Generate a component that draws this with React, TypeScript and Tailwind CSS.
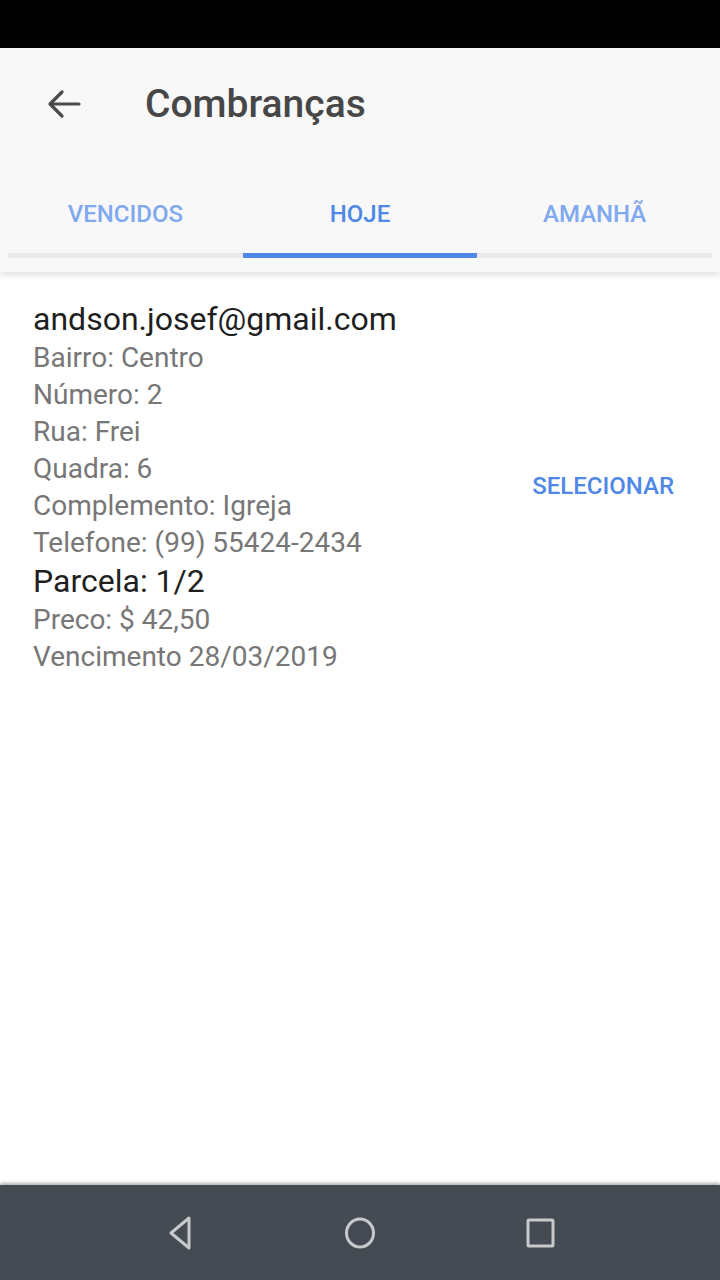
import React from "react";

const font = { fontFamily: "Roboto, 'Noto Sans', sans-serif" };

export default function App() {
  const rows = [
    "Bairro: Centro",
    "Número: 2",
    "Rua: Frei",
    "Quadra: 6",
    "Complemento: Igreja",
    "Telefone: (99) 55424-2434",
  ];
  return (
    <div className="w-[720px] h-[1280px] flex flex-col bg-white overflow-hidden" style={font}>
      <div className="h-[48px] bg-black shrink-0" />
      <div className="bg-[#f8f8f8] h-[224px] shrink-0 flex flex-col relative z-10 shadow-[0_3px_6px_rgba(0,0,0,0.12)]">
        <div className="h-[112px] flex items-center">
          <div className="w-[145px] flex items-center pl-[47px]">
            <svg width="34" height="30" viewBox="0 0 34 30" fill="none" stroke="#4a4a4a" strokeWidth="3.2" strokeLinecap="round" strokeLinejoin="round">
              <path d="M32 15H3M15 3L3 15l12 12" />
            </svg>
          </div>
          <span className="text-[39px] font-medium text-[#474747]">Combranças</span>
        </div>
        <div className="px-[8px] flex flex-col">
          <div className="flex h-[93px] pt-[14px]">
            <div className="flex-1 flex items-center justify-center text-[24px] font-medium text-[#80a9ef]">VENCIDOS</div>
            <div className="flex-1 flex items-center justify-center text-[24px] font-medium text-[#4f88e6]">HOJE</div>
            <div className="flex-1 flex items-center justify-center text-[24px] font-medium text-[#80a9ef]">AMANHÃ</div>
          </div>
          <div className="h-[5px] bg-[#ebebeb] flex">
            <div className="flex-1" />
            <div className="flex-1 bg-[#4f88e6]" />
            <div className="flex-1" />
          </div>
        </div>
      </div>
      <div className="flex-1 flex pl-[33px] pr-[46px] pt-[28px]">
        <div className="flex-1 flex flex-col">
          <div className="text-[32px] leading-[39px] text-[#1f1f1f]">andson.josef@gmail.com</div>
          {rows.map((r) => (
            <div key={r} className="text-[28px] leading-[37px] text-[#777777]">{r}</div>
          ))}
          <div className="text-[32px] leading-[40px] text-[#1f1f1f]">Parcela: 1/2</div>
          <div className="text-[28px] leading-[37px] text-[#777777]">Preco: $ 42,50</div>
          <div className="text-[28px] leading-[37px] text-[#777777]">Vencimento 28/03/2019</div>
        </div>
        <div className="flex items-start pt-[168px]">
          <span className="text-[24px] font-medium text-[#4f88e6]">SELECIONAR</span>
        </div>
      </div>
      <div className="h-[95px] bg-[#454b52] shrink-0 flex items-center justify-center gap-[136px] shadow-[0_-2px_3px_rgba(0,0,0,0.3)]">
        <svg width="44" height="44" viewBox="0 0 44 44" fill="none" stroke="#c7c9cb" strokeWidth="3" strokeLinejoin="round">
          <path d="M31 7L13 22l18 15z" />
        </svg>
        <svg width="44" height="44" viewBox="0 0 44 44" fill="none" stroke="#c7c9cb" strokeWidth="3">
          <ellipse cx="22" cy="22" rx="13.5" ry="14" />
        </svg>
        <svg width="44" height="44" viewBox="0 0 44 44" fill="none" stroke="#c7c9cb" strokeWidth="3">
          <rect x="10" y="9" width="25" height="26" rx="1" />
        </svg>
      </div>
    </div>
  );
}
